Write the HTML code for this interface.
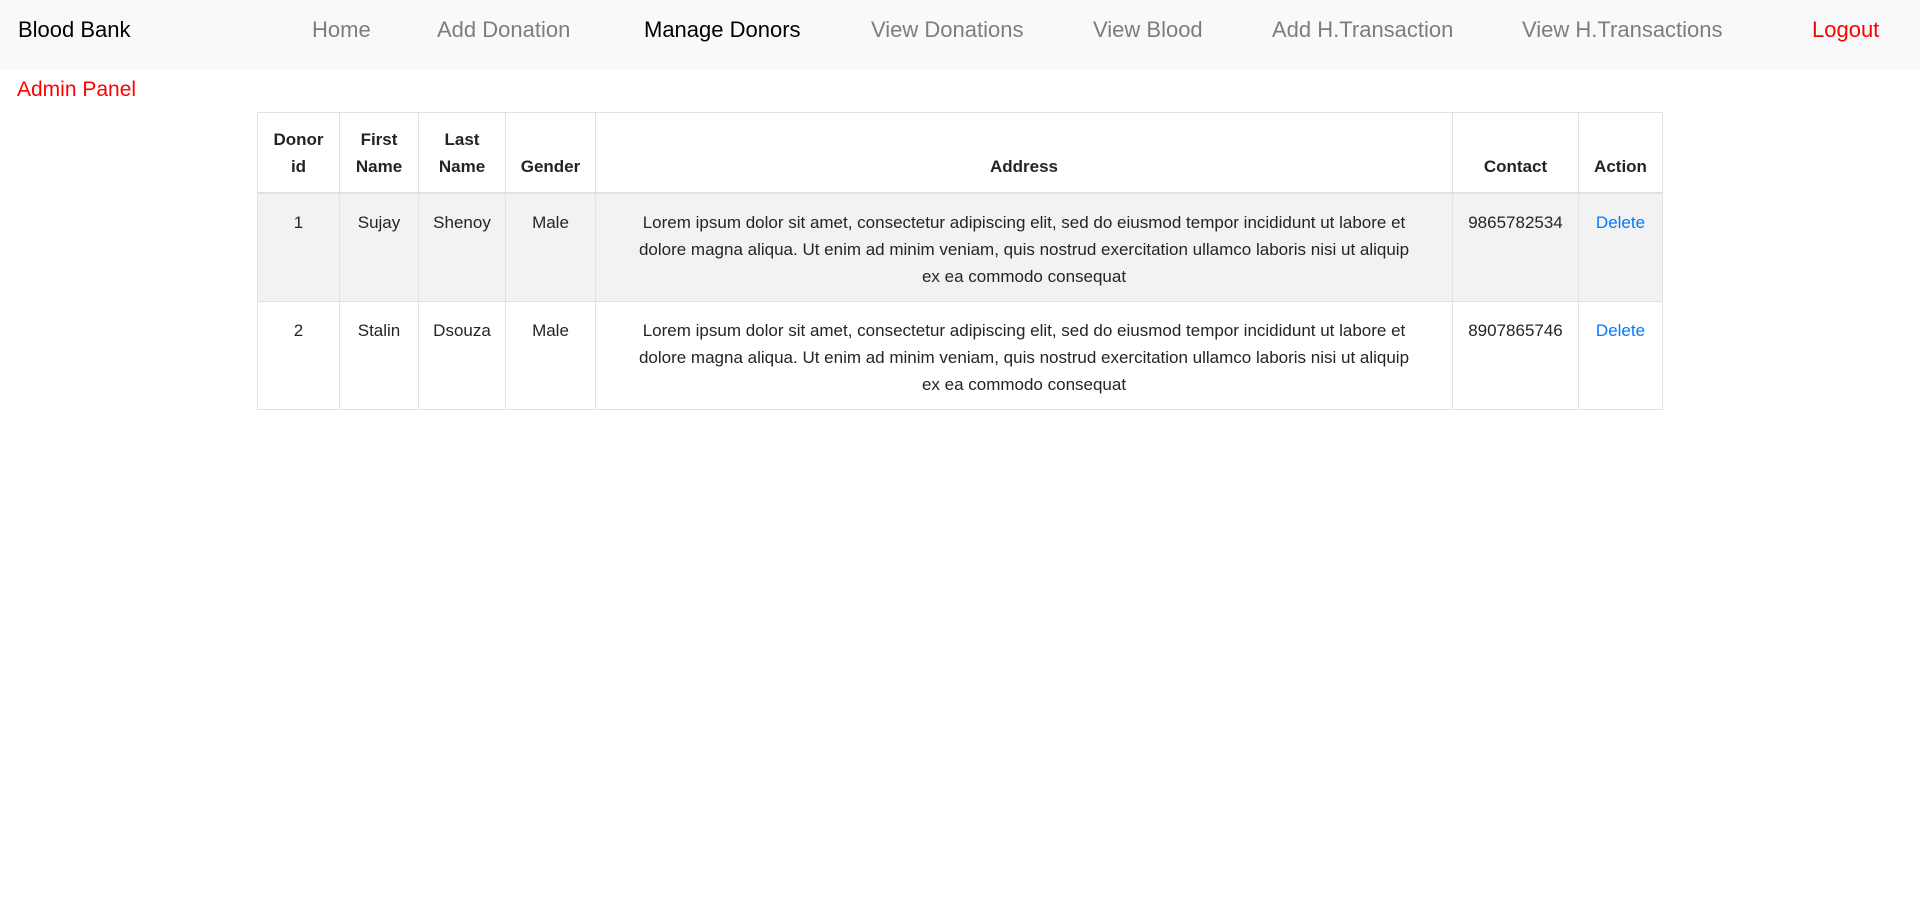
<!DOCTYPE html>
<html><head><meta charset="utf-8"><style>
body{margin:0;font-family:"Liberation Sans",sans-serif;color:#212529;background:#fff;width:1920px;height:897px;position:relative;overflow:hidden}
.nav{position:absolute;left:0;top:0;width:1920px;height:70px;background:#f8f9fa}
.nav span{position:absolute;top:17px;font-size:22px;line-height:26px;color:rgba(0,0,0,.5);white-space:nowrap}
.nav .b{color:#000}
.nav .r{color:#f00}
.admin{position:absolute;left:17px;top:77px;font-size:21px;color:#f00;line-height:26px}
table{position:absolute;left:257px;top:112px;border-collapse:collapse;table-layout:fixed;width:1405px;font-size:17px;line-height:27px}
td,th{border:1px solid #dee2e6;padding:15px 8px 11px;text-align:center;vertical-align:top}
td.ad{padding-left:38px;padding-right:38px}
th{vertical-align:bottom;border-bottom:2px solid #dee2e6;font-weight:bold;padding:13px 8px 12px}
tr.s td{background:#f2f2f2}
a{color:#007bff;text-decoration:none}
</style></head><body>
<div class="nav">
<span class="b" style="left:18px">Blood Bank</span>
<span style="left:312px">Home</span>
<span style="left:437px">Add Donation</span>
<span class="b" style="left:644px">Manage Donors</span>
<span style="left:871px">View Donations</span>
<span style="left:1093px">View Blood</span>
<span style="left:1272px">Add H.Transaction</span>
<span style="left:1522px">View H.Transactions</span>
<span class="r" style="left:1812px">Logout</span>
</div>
<div class="admin">Admin Panel</div>
<table>
<colgroup><col style="width:82px"><col style="width:79px"><col style="width:87px"><col style="width:90px"><col style="width:857px"><col style="width:126px"><col style="width:84px"></colgroup>
<tr><th>Donor id</th><th>First Name</th><th>Last Name</th><th>Gender</th><th>Address</th><th>Contact</th><th>Action</th></tr>
<tr class="s"><td>1</td><td>Sujay</td><td>Shenoy</td><td>Male</td><td class="ad">Lorem ipsum dolor sit amet, consectetur adipiscing elit, sed do eiusmod tempor incididunt ut labore et dolore magna aliqua. Ut enim ad minim veniam, quis nostrud exercitation ullamco laboris nisi ut aliquip ex ea commodo consequat</td><td>9865782534</td><td><a>Delete</a></td></tr>
<tr><td>2</td><td>Stalin</td><td>Dsouza</td><td>Male</td><td class="ad">Lorem ipsum dolor sit amet, consectetur adipiscing elit, sed do eiusmod tempor incididunt ut labore et dolore magna aliqua. Ut enim ad minim veniam, quis nostrud exercitation ullamco laboris nisi ut aliquip ex ea commodo consequat</td><td>8907865746</td><td><a>Delete</a></td></tr>
</table>
</body></html>
